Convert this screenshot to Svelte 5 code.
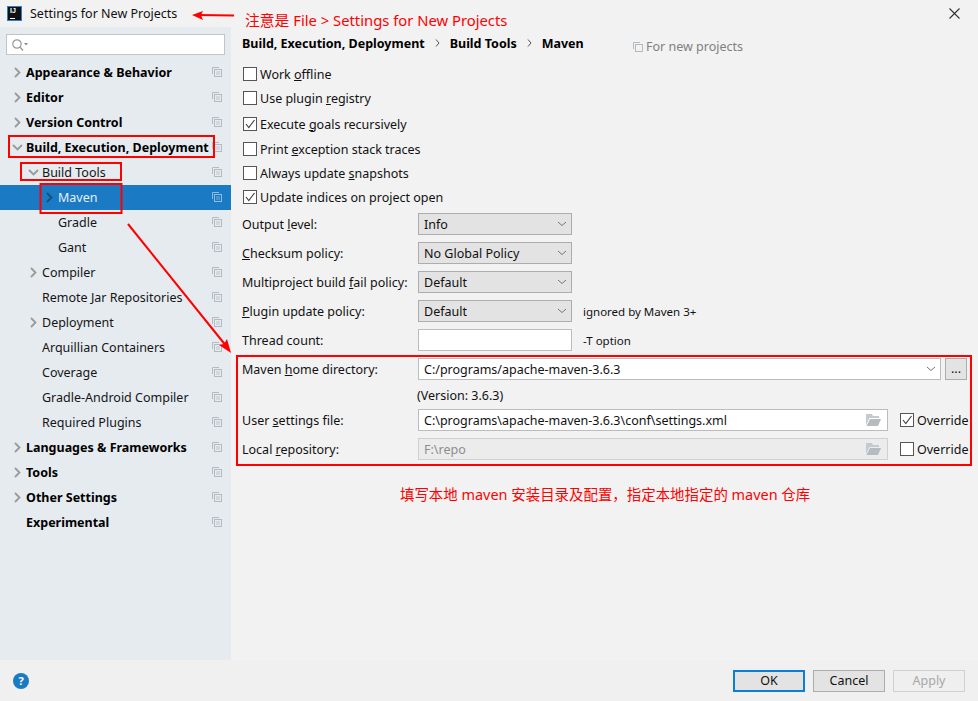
<script>
  const tree = [
    { label: 'Appearance & Behavior', depth: 0, arrow: 'right' },
    { label: 'Editor', depth: 0, arrow: 'right' },
    { label: 'Version Control', depth: 0, arrow: 'right' },
    { label: 'Build, Execution, Deployment', depth: 0, arrow: 'down' },
    { label: 'Build Tools', depth: 1, arrow: 'down' },
    { label: 'Maven', depth: 2, arrow: 'right', selected: true },
    { label: 'Gradle', depth: 2 },
    { label: 'Gant', depth: 2 },
    { label: 'Compiler', depth: 1, arrow: 'right' },
    { label: 'Remote Jar Repositories', depth: 1 },
    { label: 'Deployment', depth: 1, arrow: 'right' },
    { label: 'Arquillian Containers', depth: 1 },
    { label: 'Coverage', depth: 1 },
    { label: 'Gradle-Android Compiler', depth: 1 },
    { label: 'Required Plugins', depth: 1 },
    { label: 'Languages & Frameworks', depth: 0, arrow: 'right' },
    { label: 'Tools', depth: 0, arrow: 'right' },
    { label: 'Other Settings', depth: 0, arrow: 'right' },
    { label: 'Experimental', depth: 0 }
  ];
</script>

{#snippet check(on)}
  <span class="box">
    {#if on}
      <svg width="12" height="12" viewBox="0 0 12 12"><path d="M2 6 L4.8 9.5 L10.5 2" fill="none" stroke="#444" stroke-width="1.2" /></svg>
    {/if}
  </span>
{/snippet}

{#snippet caret()}
  <svg class="caret" width="10" height="6" viewBox="0 0 10 6"><path d="M1 1 L5 4.5 L9 1" fill="none" stroke="#777" stroke-width="1" /></svg>
{/snippet}

{#snippet folder()}
  <svg class="folder" width="15" height="12" viewBox="0 0 15 12"><path d="M0 0 H6 L7 2 H13 V4 H3.5 L0 11 Z" fill="#c4cbd0" /><path d="M4 5 H15 L12 12 H0.5 Z" fill="#b4bcc2" /></svg>
{/snippet}

<div class="window">
  <header class="titlebar">
    <span class="logo"><span class="logo-text">IJ</span><span class="logo-bar"></span></span>
    <span class="title">Settings for New Projects</span>
    <svg class="close" width="11" height="11" viewBox="0 0 11 11"><path d="M0.5 0.5 L10.5 10.5 M10.5 0.5 L0.5 10.5" stroke="#333" stroke-width="1.1" /></svg>
  </header>

  <div class="body">
    <aside class="sidebar">
      <div class="search">
        <svg width="18" height="14" viewBox="0 0 18 14"><circle cx="6" cy="6" r="4.2" fill="none" stroke="#9a9a9a" stroke-width="1.2" /><path d="M9 9 L12 12.5" stroke="#9a9a9a" stroke-width="1.4" /><path d="M13 5 H17 L15 7.5 Z" fill="#8a8a8a" /></svg>
      </div>
      <ul class="tree">
        {#each tree as item}
          <li class="row" class:selected={item.selected} class:bold={item.depth === 0}>
            <span class="arrow depth-{item.depth}">
              {#if item.arrow === 'right'}
                <svg width="9" height="11" viewBox="0 0 9 11"><path d="M2 1 L6.5 5.5 L2 10" fill="none" stroke="currentColor" stroke-width="1.8" /></svg>
              {:else if item.arrow === 'down'}
                <svg width="11" height="9" viewBox="0 0 11 9"><path d="M1 2 L5.5 6.5 L10 2" fill="none" stroke="currentColor" stroke-width="1.8" /></svg>
              {/if}
            </span>
            <span class="label">{item.label}</span>
            <svg class="copy" width="10" height="10" viewBox="0 0 10 10"><path d="M0.5 7 V0.5 H7" fill="none" stroke="currentColor" /><rect x="2.5" y="2.5" width="7" height="7" fill="none" stroke="currentColor" /><path d="M4 5 H8 M4 7 H8" stroke="currentColor" stroke-width="0.8" /></svg>
          </li>
        {/each}
      </ul>
    </aside>

    <main class="content">
      <div class="crumbs">
        <b>Build, Execution, Deployment</b>
        <svg width="5" height="8" viewBox="0 0 5 8"><path d="M1 0.5 L4 4 L1 7.5" fill="none" stroke="#555" /></svg>
        <b>Build Tools</b>
        <svg width="5" height="8" viewBox="0 0 5 8"><path d="M1 0.5 L4 4 L1 7.5" fill="none" stroke="#555" /></svg>
        <b>Maven</b>
        <span class="scope">
          <svg class="scope-icon" width="10" height="10" viewBox="0 0 10 10"><path d="M0.5 7 V0.5 H7" fill="none" stroke="currentColor" /><rect x="2.5" y="2.5" width="7" height="7" fill="none" stroke="currentColor" /></svg>
          For new projects
        </span>
      </div>

      <div class="checks">
        <label class="check">{@render check(false)}<span>Work <u>o</u>ffline</span></label>
        <label class="check">{@render check(false)}<span>Use plugin <u>r</u>egistry</span></label>
        <label class="check gap-2">{@render check(true)}<span>Execute <u>g</u>oals recursively</span></label>
        <label class="check gap-1">{@render check(false)}<span>Print <u>e</u>xception stack traces</span></label>
        <label class="check">{@render check(false)}<span>Always update <u>s</u>napshots</span></label>
        <label class="check">{@render check(true)}<span>Update indices on project open</span></label>
      </div>

      <div class="form">
        <span>Output <u>l</u>evel:</span>
        <div class="select">Info {@render caret()}</div>
        <span></span>
        <span><u>C</u>hecksum policy:</span>
        <div class="select">No Global Policy {@render caret()}</div>
        <span></span>
        <span>Multiproject build <u>f</u>ail policy:</span>
        <div class="select">Default {@render caret()}</div>
        <span></span>
        <span><u>P</u>lugin update policy:</span>
        <div class="select">Default {@render caret()}</div>
        <span class="hint">ignored by Maven 3+</span>
        <span>Thread count:</span>
        <div class="input"></div>
        <span class="hint">-T option</span>
      </div>

      <div class="maven">
        <div class="maven-row">
          <span class="maven-label">Maven <u>h</u>ome directory:</span>
          <div class="input grow">C:/programs/apache-maven-3.6.3 {@render caret()}</div>
          <button class="dots">...</button>
        </div>
        <div class="version">(Version: 3.6.3)</div>
        <div class="maven-row">
          <span class="maven-label">User <u>s</u>ettings file:</span>
          <div class="input grow">C:\programs\apache-maven-3.6.3\conf\settings.xml {@render folder()}</div>
          <label class="check override">{@render check(true)}<span>Override</span></label>
        </div>
        <div class="maven-row second">
          <span class="maven-label">Local <u>r</u>epository:</span>
          <div class="input grow disabled">F:\repo {@render folder()}</div>
          <label class="check override">{@render check(false)}<span>Override</span></label>
        </div>
      </div>
    </main>
  </div>

  <footer class="footer">
    <span class="help">?</span>
    <div class="buttons">
      <button class="btn primary">OK</button>
      <button class="btn">Cancel</button>
      <button class="btn off">Apply</button>
    </div>
  </footer>

  <!-- annotations drawn over the screenshot -->
  <svg class="marks" width="978" height="701" viewBox="0 0 978 701">
    <g fill="none" stroke="#f00" stroke-width="2">
      <rect x="9" y="136" width="205" height="21" />
      <rect x="21" y="163" width="100" height="17" />
      <rect x="40.5" y="184" width="81" height="29" />
      <rect x="237" y="356" width="734" height="109" />
      <path d="M234 15.5 L198 15" />
      <path d="M128 224 L227 347" />
    </g>
    <path d="M192 15 L203 11 L201 15 L203 20 Z" fill="#f00" />
    <path d="M231 353 L219 345 L224 344 L227 339 Z" fill="#f00" />
  </svg>
  <div class="note top">注意是 File &gt; Settings for New Projects</div>
  <div class="note bottom">填写本地 maven 安装目录及配置，指定本地指定的 maven 仓库</div>
</div>

<style>
  :global(body) {
    margin: 0;
    background: #f2f2f2;
  }

  .window {
    position: relative;
    width: 978px;
    height: 701px;
    display: flex;
    flex-direction: column;
    overflow: hidden;
    background: #f2f2f2;
    color: #111;
    font-family: "Noto Sans", "Noto Sans CJK SC", sans-serif;
    font-size: 12.5px;
  }

  .titlebar {
    height: 27px;
    display: flex;
    align-items: center;
    padding-left: 7px;
    flex: none;
  }

  .logo {
    position: relative;
    width: 13px;
    height: 13px;
    background: #111;
    border: 1px solid #2a7fd0;
  }

  .logo-text {
    position: absolute;
    left: 2px;
    top: 0;
    color: #fff;
    font: bold 7px/8px "Liberation Sans", sans-serif;
  }

  .logo-bar {
    position: absolute;
    left: 2px;
    bottom: 1px;
    width: 5px;
    height: 1px;
    background: #fff;
  }

  .title {
    margin-left: 8px;
    font-size: 12.5px;
  }

  .close {
    margin-left: auto;
    margin-right: 18px;
  }

  .body {
    height: 633px;
    display: flex;
    flex: none;
  }

  .sidebar {
    width: 231px;
    flex: none;
    background: #e6ebf0;
    padding-top: 7px;
    box-sizing: border-box;
  }

  .search {
    height: 21px;
    margin: 0 6px 5px;
    width: 219px;
    box-sizing: border-box;
    background: #fff;
    border: 1px solid #c4c4c4;
    display: flex;
    align-items: center;
    padding-left: 4px;
  }

  .tree {
    list-style: none;
    margin: 0;
    padding: 0;
  }

  .row {
    height: 25px;
    display: flex;
    align-items: center;
    color: #151515;
    white-space: nowrap;
    padding-bottom: 1px;
    box-sizing: border-box;
  }

  .row.bold {
    font-weight: 700;
    color: #000;
  }

  .row.selected {
    background: #1a7ac4;
    color: #e6f0f8;
  }

  .arrow {
    width: 16px;
    flex: none;
    display: flex;
    align-items: center;
    justify-content: center;
    color: #9a9a9a;
  }

  .selected .arrow {
    color: #154f7e;
  }

  .depth-0 { margin-left: 9px; }
  .depth-1 { margin-left: 25px; }
  .depth-2 { margin-left: 41px; }

  .label {
    margin-left: 1px;
  }

  .copy {
    position: absolute;
    left: 212px;
    color: #b2bac2;
  }

  .selected .copy {
    color: #90bcdf;
  }

  .content {
    flex: 1;
    padding-left: 11px;
    padding-right: 10px;
  }

  .crumbs {
    height: 33px;
    display: flex;
    align-items: center;
    gap: 10px;
    position: relative;
    padding-bottom: 1px;
    box-sizing: border-box;
  }

  .crumbs b {
    color: #000;
  }

  .scope {
    position: absolute;
    left: 391px;
    top: 11px;
    color: #808080;
    font-size: 12.5px;
    display: flex;
    align-items: center;
    gap: 3px;
  }

  .scope-icon {
    color: #b2bac2;
  }

  .checks {
    padding-top: 2px;
    display: flex;
    flex-direction: column;
  }

  .check {
    height: 24px;
    display: flex;
    align-items: center;
    gap: 3px;
  }

  .gap-2 {
    margin-top: 2px;
  }

  .gap-1 {
    margin-top: 1px;
  }

  .box {
    width: 14px;
    height: 14px;
    box-sizing: border-box;
    margin-left: 1px;
    background: #fff;
    border: 1px solid #555;
    display: flex;
    align-items: center;
    justify-content: center;
    flex: none;
  }

  .form {
    margin-top: 4px;
    display: grid;
    grid-template-columns: 176px 154px auto;
    grid-auto-rows: 22px;
    row-gap: 7px;
    align-items: center;
  }

  .select,
  .input {
    height: 22px;
    box-sizing: border-box;
    padding: 0 5px;
    display: flex;
    align-items: center;
    justify-content: space-between;
    white-space: nowrap;
  }

  .select {
    background: #e3e3e3;
    border: 1px solid #adadad;
  }

  .input {
    background: #fff;
    border: 1px solid #bcbcbc;
  }

  .input.disabled {
    background: #ececec;
    border-color: #d0d0d0;
    color: #8c8c8c;
  }

  .caret {
    margin-right: -1px;
  }

  .folder {
    margin-right: 1px;
  }

  .hint {
    margin-left: 11px;
    font-size: 11.5px;
  }

  .maven {
    margin-top: 7px;
  }

  .maven-row {
    display: flex;
    align-items: center;
    height: 22px;
  }

  .maven-row.second {
    margin-top: 7px;
  }

  .maven-label {
    width: 176px;
    flex: none;
  }

  .grow {
    flex: 1;
  }

  .dots {
    width: 22px;
    height: 22px;
    margin-left: 4px;
    margin-right: 1px;
    padding: 0 0 2px;
    background: #e3e3e3;
    border: 1px solid #adadad;
    font: inherit;
    color: #111;
  }

  .version {
    height: 29px;
    line-height: 31px;
    padding-left: 175px;
  }

  .override {
    width: 69px;
    height: 22px;
    margin-left: 11px;
    flex: none;
  }

  .footer {
    flex: 1;
    display: flex;
    align-items: center;
    justify-content: space-between;
    background: #f0f0f0;
    padding: 0 13px;
  }

  .help {
    width: 16px;
    height: 16px;
    border-radius: 50%;
    background: #1a7ac4;
    color: #fff;
    font-size: 11px;
    font-weight: 700;
    line-height: 16px;
    text-align: center;
  }

  .buttons {
    display: flex;
    gap: 8px;
  }

  .btn {
    width: 72px;
    height: 22px;
    padding: 0;
    box-sizing: border-box;
    background: #e3e3e3;
    border: 1px solid #adadad;
    font: inherit;
    color: #111;
  }

  .btn.primary {
    border: 2px solid #0a7fd8;
  }

  .btn.off {
    background: #efefef;
    border-color: #d0d0d0;
    color: #a8a8a8;
  }

  .marks {
    position: absolute;
    left: 0;
    top: 0;
    pointer-events: none;
  }

  .note {
    position: absolute;
    color: #f00;
    white-space: nowrap;
  }

  .note.top {
    left: 245px;
    top: 9px;
    font-size: 14.8px;
  }

  .note.bottom {
    left: 400px;
    top: 483px;
    font-size: 14.45px;
  }
</style>
